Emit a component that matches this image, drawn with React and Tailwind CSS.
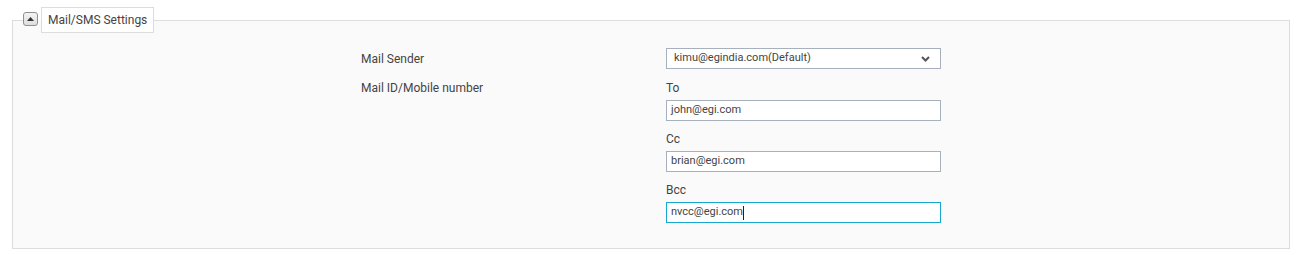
import React from 'react';

const font = { fontFamily: 'Roboto, "Liberation Sans", sans-serif' };

const Field = ({ label, value, focused }) => (
  <div className="mb-[9px]">
    <div className="h-[18px] leading-[18px] mb-[3px] text-[12px] text-[#444]">{label}</div>
    <div
      className={`h-[21px] w-[275px] bg-white flex items-center px-[4px] text-[11px] text-[#444] ${
        focused ? 'border border-[#17a8d0]' : 'border border-[#a7b0bd]'
      }`}
    >
      <span>{value}</span>
      {focused && <span className="inline-block w-[1px] h-[14px] bg-[#222]" />}
    </div>
  </div>
);

export default function App() {
  return (
    <div className="bg-white w-[1297px] h-[255px] pt-[7px] px-[12px]" style={font}>
      <fieldset className="border border-[#dddddd] bg-[#fafafa] w-[1278px] min-w-0 pb-[16px]">
        <legend className="ml-[10px]">
          <span className="flex items-center gap-[3px]">
            <button className="w-[15px] h-[14px] rounded-[3px] border border-[#8f8f8f] bg-gradient-to-b from-[#f4f4f4] to-[#dedede] flex items-center justify-center mt-[-2px]">
              <svg width="7" height="4" viewBox="0 0 7 4">
                <polygon points="0,4 3.5,0 7,4" fill="#333" />
              </svg>
            </button>
            <span className="h-[26px] px-[6px] flex items-center border border-[#dddddd] bg-white text-[12px] text-[#444]">
              Mail/SMS Settings
            </span>
          </span>
        </legend>

        <div className="flex justify-center pt-[15px]">
          <div className="w-[580px]">
            <div className="flex mb-[10px]">
              <div className="w-[305px] h-[21px] flex items-center text-[12px] text-[#444]">Mail Sender</div>
              <div className="h-[21px] w-[275px] bg-white border border-[#a7b0bd] flex items-center justify-between pl-[7px] pr-[10px] text-[11px] text-[#444]">
                <span>kimu@egindia.com(Default)</span>
                <svg width="9" height="6" viewBox="0 0 9 6">
                  <path d="M1 1 L4.5 4.5 L8 1" fill="none" stroke="#555" strokeWidth="2" />
                </svg>
              </div>
            </div>
            <div className="flex">
              <div className="w-[305px] h-[18px] leading-[18px] text-[12px] text-[#444]">Mail ID/Mobile number</div>
              <div>
                <Field label="To" value="john@egi.com" />
                <Field label="Cc" value="brian@egi.com" />
                <Field label="Bcc" value="nvcc@egi.com" focused />
              </div>
            </div>
          </div>
        </div>
      </fieldset>
    </div>
  );
}
